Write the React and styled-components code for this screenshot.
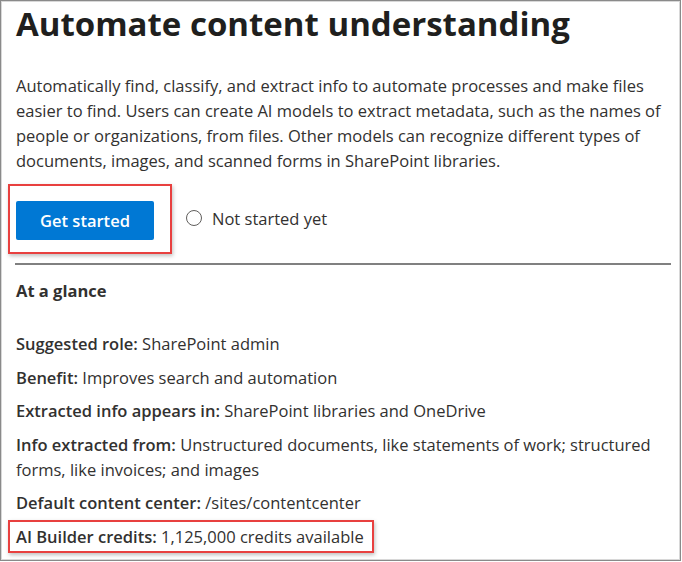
import React from 'react';
import styled, { createGlobalStyle } from 'styled-components';

const GlobalStyle = createGlobalStyle`
  html, body {
    margin: 0;
    padding: 0;
    background: #ffffff;
  }
  body {
    font-family: 'Open Sans', 'Noto Sans', sans-serif;
    color: #323130;
  }
`;

const Frame = styled.div`
  box-sizing: border-box;
  width: 681px;
  height: 561px;
  border: 1px solid #8a8a8a;
  box-shadow: inset 1px 1px 0 #d8d8d8, inset -1px -1px 0 #d8d8d8;
  padding: 0 8px 0 15px;
  overflow: hidden;
`;

const Title = styled.h1`
  margin: 3px 0 0;
  font-size: 33px;
  line-height: 40px;
  font-weight: 700;
  color: #201f1e;
`;

const Intro = styled.p`
  margin: 29px 0 0;
  font-size: 16.5px;
  line-height: 25px;
  color: #323130;
`;

const ActionRow = styled.div`
  display: flex;
  align-items: center;
  gap: 14px;
  margin: 11px 0 0 -8px;
`;

const Highlight = styled.div`
  display: inline-flex;
  border: 2px solid #e8403f;
  box-shadow: 1px 2px 4px rgba(0, 0, 0, 0.25);
  padding: ${p => p.$pad};
  margin: ${p => p.$margin || 0};
`;

const PrimaryButton = styled.button`
  width: 138px;
  height: 39px;
  border: none;
  border-radius: 2px;
  background: #0078d4;
  color: #ffffff;
  font-family: inherit;
  font-size: 16.5px;
  font-weight: 600;
  cursor: pointer;
`;

const Status = styled.label`
  display: flex;
  align-items: center;
  gap: 10px;
  font-size: 16.5px;
  color: #323130;
  margin-top: -2px;
`;

const Radio = styled.span`
  box-sizing: border-box;
  width: 16px;
  height: 16px;
  border: 1px solid #605e5c;
  border-radius: 50%;
`;

const Divider = styled.hr`
  margin: 9px 0 0 -1px;
  width: 656px;
  border: none;
  border-top: 2px solid #808080;
`;

const Heading = styled.h2`
  margin: 13px 0 0;
  font-size: 16.5px;
  line-height: 25px;
  font-weight: 700;
  color: #323130;
`;

const Facts = styled.div`
  display: flex;
  flex-direction: column;
  gap: 8.5px;
  margin-top: 28px;
`;

const Fact = styled.div`
  font-size: 16.5px;
  line-height: 25px;
  color: #323130;

  b {
    font-weight: 600;
  }
`;

const facts = [
  ['Suggested role:', 'SharePoint admin'],
  ['Benefit:', 'Improves search and automation'],
  ['Extracted info appears in:', 'SharePoint libraries and OneDrive'],
  [
    'Info extracted from:',
    'Unstructured documents, like statements of work; structured forms, like invoices; and images'
  ],
  ['Default content center:', '/sites/contentcenter']
];

const App = () => {
  return (
    <>
      <GlobalStyle />
      <Frame>
        <Title>Automate content understanding</Title>
        <Intro>
          Automatically find, classify, and extract info to automate processes and make files
          easier to find. Users can create AI models to extract metadata, such as the names of
          people or organizations, from files. Other models can recognize different types of
          documents, images, and scanned forms in SharePoint libraries.
        </Intro>
        <ActionRow>
          <Highlight $pad="15px 16px 12px 6px">
            <PrimaryButton>Get started</PrimaryButton>
          </Highlight>
          <Status>
            <Radio />
            Not started yet
          </Status>
        </ActionRow>
        <Divider />
        <Heading>At a glance</Heading>
        <Facts>
          {facts.map(([label, value]) => (
            <Fact key={label}>
              <b>{label}</b> {value}
            </Fact>
          ))}
          <Fact>
            <Highlight $pad="2px 8px 2px 6px" $margin="-4px 0 0 -8px">
              <span>
                <b>AI Builder credits:</b> 1,125,000 credits available
              </span>
            </Highlight>
          </Fact>
        </Facts>
      </Frame>
    </>
  );
};

export default App;
